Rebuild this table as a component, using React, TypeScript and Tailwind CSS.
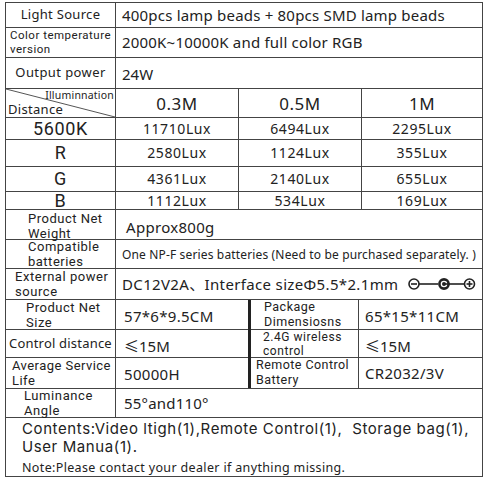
const lux = [
  { label: 'Distance', values: ['0.3M', '0.5M', '1M'] },
  { label: '5600K', values: ['11710Lux', '6494Lux', '2295Lux'], h: 'h-[22px]' },
  { label: 'R', values: ['2580Lux', '1124Lux', '355Lux'], h: 'h-[27px]' },
  { label: 'G', values: ['4361Lux', '2140Lux', '655Lux'], h: 'h-[25px]' },
  { label: 'B', values: ['1112Lux', '534Lux', '169Lux'], h: 'h-[18px]' },
];

const roboto = { fontFamily: 'Roboto, "Noto Sans", sans-serif' };

function Connector() {
  return (
    <svg width="68" height="14" viewBox="0 0 68 14" className="ml-[10px]" aria-hidden="true">
      <g stroke="#222" strokeWidth="1.6" fill="none">
        <circle cx="6" cy="7" r="5" />
        <line x1="3" y1="7" x2="9" y2="7" />
        <line x1="11" y1="7" x2="30" y2="7" />
        <circle cx="36" cy="7" r="4.6" strokeWidth="2.6" />
        <line x1="36" y1="7" x2="57" y2="7" />
        <circle cx="61.5" cy="7" r="5" />
        <line x1="58.5" y1="7" x2="64.5" y2="7" />
        <line x1="61.5" y1="4" x2="61.5" y2="10" />
      </g>
      <circle cx="36" cy="7" r="2" fill="#222" />
    </svg>
  );
}

function Label({ children, className = '' }: { children: React.ReactNode; className?: string }) {
  return (
    <div className={`flex flex-col justify-center ${className}`} style={roboto}>
      {children}
    </div>
  );
}

export default function App() {
  return (
    <div className="min-h-[481px] bg-white pt-[2px] pl-[5px] text-[#222]" style={{ fontFamily: '"Noto Sans", "Noto Sans CJK SC", sans-serif' }}>
      <div className="w-[478px] border border-[#444]">
        <div className="grid h-[25px] grid-cols-[109px_1fr] border-b border-[#444]">
          <div className="flex items-center justify-center text-[13px] tracking-[0.3px]">Light Source</div>
          <div className="flex items-center border-l border-[#444] pl-[6px] text-[15px] tracking-[0.2px]">
            400pcs lamp beads + 80pcs SMD lamp beads
          </div>
        </div>

        <div className="grid h-[30px] grid-cols-[109px_1fr] border-b border-[#444]">
          <Label className="pl-[4px] text-[11.5px] leading-[13.5px] tracking-[0.5px]">
            <span>Color temperature</span>
            <span>version</span>
          </Label>
          <div className="flex items-center border-l border-[#444] pl-[6px] text-[15px] tracking-[0.2px]">
            2000K~10000K and full color RGB
          </div>
        </div>

        <div className="grid h-[31px] grid-cols-[109px_1fr] border-b border-[#444]">
          <div className="flex items-center justify-center text-[13px] tracking-[0.4px]">Output power</div>
          <div className="flex items-center border-l border-[#444] pl-[6px] pt-[3px] text-[15px]">24W</div>
        </div>

        {lux.map((row, i) => (
          <div
            key={row.label}
            className={`grid grid-cols-[109px_123px_123px_1fr] border-b border-[#444] ${row.h ?? 'h-[29px]'}`}
          >
            {i === 0 ? (
              <div className="relative">
                <svg className="absolute inset-0 h-full w-full" viewBox="0 0 109 28" preserveAspectRatio="none" aria-hidden="true">
                  <line x1="0" y1="0" x2="109" y2="28" stroke="#555" strokeWidth="1" />
                </svg>
                <span className="absolute right-[1px] top-[1px] text-[10.5px] leading-none tracking-[0.2px]">Illuminnation</span>
                <span className="absolute bottom-[1px] left-[2px] text-[13px] leading-none tracking-[0.3px]">Distance</span>
              </div>
            ) : (
              <div className="flex items-center justify-center text-[18px] leading-none tracking-[0.6px]" style={roboto}>
                {row.label}
              </div>
            )}
            {row.values.map((v) => (
              <div
                key={v}
                className={`flex items-center justify-center border-l border-[#444] leading-none ${
                  i === 0 ? 'text-[17px] tracking-[0.5px]' : 'text-[14px] tracking-[0.6px]'
                }`}
              >
                {v}
              </div>
            ))}
          </div>
        ))}

        <div className="grid h-[30px] grid-cols-[109px_1fr] border-b border-[#444]">
          <Label className="pl-[22px] pt-[2px] text-[13px] leading-[14.5px] tracking-[0.5px]">
            <span>Product Net</span>
            <span>Weight</span>
          </Label>
          <div className="flex items-center border-l border-[#444] pl-[10px] pt-[4px] text-[15px] tracking-[0.3px]">Approx800g</div>
        </div>

        <div className="grid h-[29px] grid-cols-[109px_1fr] border-b border-[#444]">
          <Label className="pl-[22px] text-[13px] leading-[14.5px] tracking-[0.5px]">
            <span>Compatible</span>
            <span>batteries</span>
          </Label>
          <div className="flex items-center whitespace-nowrap border-l border-[#444] pl-[6px] text-[12px] tracking-[0.15px]">
            One NP-F series batteries (Need to be purchased separately. )
          </div>
        </div>

        <div className="grid h-[31px] grid-cols-[109px_1fr] border-b border-[#444]">
          <Label className="pl-[9px] text-[13px] leading-[15px] tracking-[0.55px]">
            <span>External power</span>
            <span>source</span>
          </Label>
          <div className="flex items-center whitespace-nowrap border-l border-[#444] pl-[6px] text-[15px] tracking-[0.35px]">
            DC12V2A、Interface sizeΦ5.5*2.1mm
            <Connector />
          </div>
        </div>

        <div className="grid h-[30px] grid-cols-[109px_133px_110px_1fr] border-b border-[#444]">
          <Label className="pl-[20px] text-[13px] leading-[15px] tracking-[0.5px]">
            <span>Product Net</span>
            <span>Size</span>
          </Label>
          <div className="flex items-center border-l border-[#444] pl-[8px] pt-[3px] text-[15px] tracking-[0.3px]">57*6*9.5CM</div>
          <Label className="border-l-[3px] border-[#222] pl-[13px] text-[12.5px] leading-[14.8px] tracking-[0.5px]">
            <span>Package</span>
            <span>Dimensiosns</span>
          </Label>
          <div className="flex items-center border-l border-[#444] pl-[6px] pt-[2px] text-[15px] tracking-[0.3px]">65*15*11CM</div>
        </div>

        <div className="grid h-[28px] grid-cols-[109px_133px_110px_1fr] border-b border-[#444]">
          <div className="flex items-center pl-[3px] text-[13px] tracking-[0.2px]">Control distance</div>
          <div className="flex items-center border-l border-[#444] pl-[8px] pt-[4px] text-[15px]">≤15M</div>
          <Label className="border-l-[3px] border-[#222] pl-[12px] text-[12px] leading-[14.1px] tracking-[0.55px]">
            <span>2.4G wireless</span>
            <span>control</span>
          </Label>
          <div className="flex items-center border-l border-[#444] pl-[6px] pt-[4px] text-[15px]">≤15M</div>
        </div>

        <div className="grid h-[31px] grid-cols-[109px_133px_110px_1fr] border-b border-[#444]">
          <Label className="pl-[6px] text-[13px] leading-[15px] tracking-[0.45px]">
            <span>Average Service</span>
            <span>Life</span>
          </Label>
          <div className="flex items-center border-l border-[#444] pl-[8px] pt-[3px] text-[15px] tracking-[0.3px]">50000H</div>
          <Label className="border-l-[3px] border-[#222] pl-[5px] text-[12.5px] leading-[14.8px] tracking-[0.45px]">
            <span>Remote Control</span>
            <span>Battery</span>
          </Label>
          <div className="flex items-center border-l border-[#444] pl-[6px] text-[15px] tracking-[0.3px]">CR2032/3V</div>
        </div>

        <div className="grid h-[29px] grid-cols-[109px_1fr] border-b border-[#444]">
          <Label className="pl-[18px] text-[13px] leading-[14.5px] tracking-[0.6px]">
            <span>Luminance</span>
            <span>Angle</span>
          </Label>
          <div className="flex items-center border-l border-[#444] pl-[8px] text-[15px] tracking-[0.2px]">55°and110°</div>
        </div>

        <div className="flex h-[58px] flex-col pl-[16px] pt-[2px]">
          <p
            className="text-[15px] leading-[18.2px] tracking-[0.6px]"
            style={{ fontFamily: 'Inter, "Noto Sans", sans-serif' }}
          >
            Contents:Video ltigh(1),Remote Control(1),&nbsp; Storage bag(1),
            <br />
            User Manua(1).
          </p>
          <p className="mt-auto pb-[2px] text-[12.5px] leading-none tracking-[0.35px]">Note:Please contact your dealer if anything missing.</p>
        </div>
      </div>
    </div>
  );
}
